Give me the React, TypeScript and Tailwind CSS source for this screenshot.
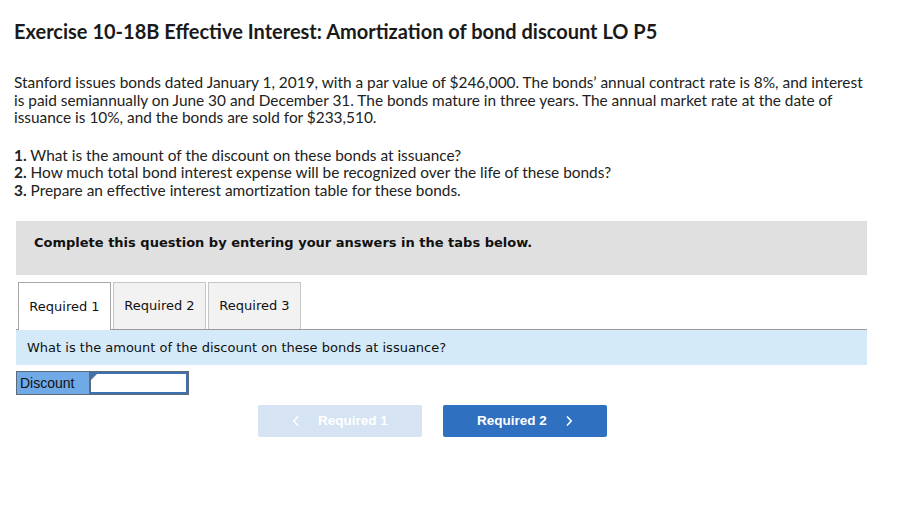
import React from 'react';

const sans = 'font-["Lato","Noto_Sans",sans-serif]';

const Tab = ({ label, active }: { label: string; active?: boolean }) => (
  <div
    className={`flex h-[47px] w-[93px] items-center justify-center border border-b-0 text-[13px] text-[#111] font-["DejaVu_Sans",Verdana,sans-serif] ${
      active ? 'relative z-10 -mb-px h-[48px] border-[#a8a8a8] bg-white' : 'border-[#c6c6c6] bg-[#f2f2f2]'
    }`}
  >
    {label}
  </div>
);

const Chevron = ({ dir }: { dir: 'left' | 'right' }) => (
  <svg width="8" height="12" viewBox="0 0 8 12" fill="none" stroke="currentColor" strokeWidth="1.6">
    {dir === 'left' ? <path d="M6 1.5 1.8 6 6 10.5" /> : <path d="M2 1.5 6.2 6 2 10.5" />}
  </svg>
);

export default function App() {
  return (
    <div className="min-h-[508px] w-[923px] bg-white text-[#222]">
      <div className="pl-[14px] pt-[20px]">
        <h1 className={`${sans} text-[20px] font-bold leading-[22px] text-[#1a1a1a]`}>
          Exercise 10-18B Effective Interest: Amortization of bond discount LO P5
        </h1>

        <p className={`${sans} mt-[32px] w-[880px] text-[15.4px] leading-[17.5px]`}>
          Stanford issues bonds dated January 1, 2019, with a par value of $246,000. The bonds’ annual contract rate is 8%, and interest
          <br />
          is paid semiannually on June 30 and December 31. The bonds mature in three years. The annual market rate at the date of
          <br />
          issuance is 10%, and the bonds are sold for $233,510.
        </p>

        <ol className={`${sans} mt-[20px] text-[15.4px] leading-[17.5px]`}>
          <li>
            <span className="font-bold">1.</span> What is the amount of the discount on these bonds at issuance?
          </li>
          <li>
            <span className="font-bold">2.</span> How much total bond interest expense will be recognized over the life of these bonds?
          </li>
          <li>
            <span className="font-bold">3.</span> Prepare an effective interest amortization table for these bonds.
          </li>
        </ol>
      </div>

      <div className="ml-[16px] mt-[22px] w-[851px]">
        <div className="h-[54px] bg-[#e0e0e0] pl-[18px] pt-[14px]">
          <div className='font-["DejaVu_Sans",Verdana,sans-serif] text-[13px] font-bold leading-[16px] text-[#111]'>
            Complete this question by entering your answers in the tabs below.
          </div>
        </div>

        <div className="mt-[7px] flex gap-[2px] pl-[2px]">
          <Tab label="Required 1" active />
          <Tab label="Required 2" />
          <Tab label="Required 3" />
        </div>

        <div className="flex h-[36px] items-center border-t border-[#9a9a9a] bg-[#d5eaf8] pl-[11px]">
          <span className='font-["DejaVu_Sans",Verdana,sans-serif] text-[13px] text-[#111]'>
            What is the amount of the discount on these bonds at issuance?
          </span>
        </div>

        <div className="mt-[6px] flex h-[24px] w-[173px] border border-[#5d6b7a]">
          <div className='flex w-[72px] items-center bg-[#6fa9e6] pl-[3px] font-["Liberation_Sans",Arial,sans-serif] text-[14px] text-[#111]'>
            Discount
          </div>
          <div className="relative flex-1 border-2 border-l-[#5d6b7a] border-[#3f70b0] bg-white">
            <div className="absolute left-0 top-0 h-0 w-0 border-r-[6px] border-t-[6px] border-r-transparent border-t-[#3f70b0]" />
          </div>
        </div>

        <div className="mt-[10px] flex gap-[21px] pl-[242px]">
          <button className='flex h-[32px] w-[164px] items-center justify-center gap-[18px] rounded-[2px] bg-[#d5e3f3] font-["Liberation_Sans",Arial,sans-serif] text-[13.5px] font-bold text-white'>
            <Chevron dir="left" />
            <span>Required 1</span>
          </button>
          <button className='flex h-[32px] w-[164px] items-center justify-center gap-[18px] rounded-[2px] bg-[#2f70c1] font-["Liberation_Sans",Arial,sans-serif] text-[13.5px] font-bold text-white'>
            <span>Required 2</span>
            <Chevron dir="right" />
          </button>
        </div>
      </div>
    </div>
  );
}
